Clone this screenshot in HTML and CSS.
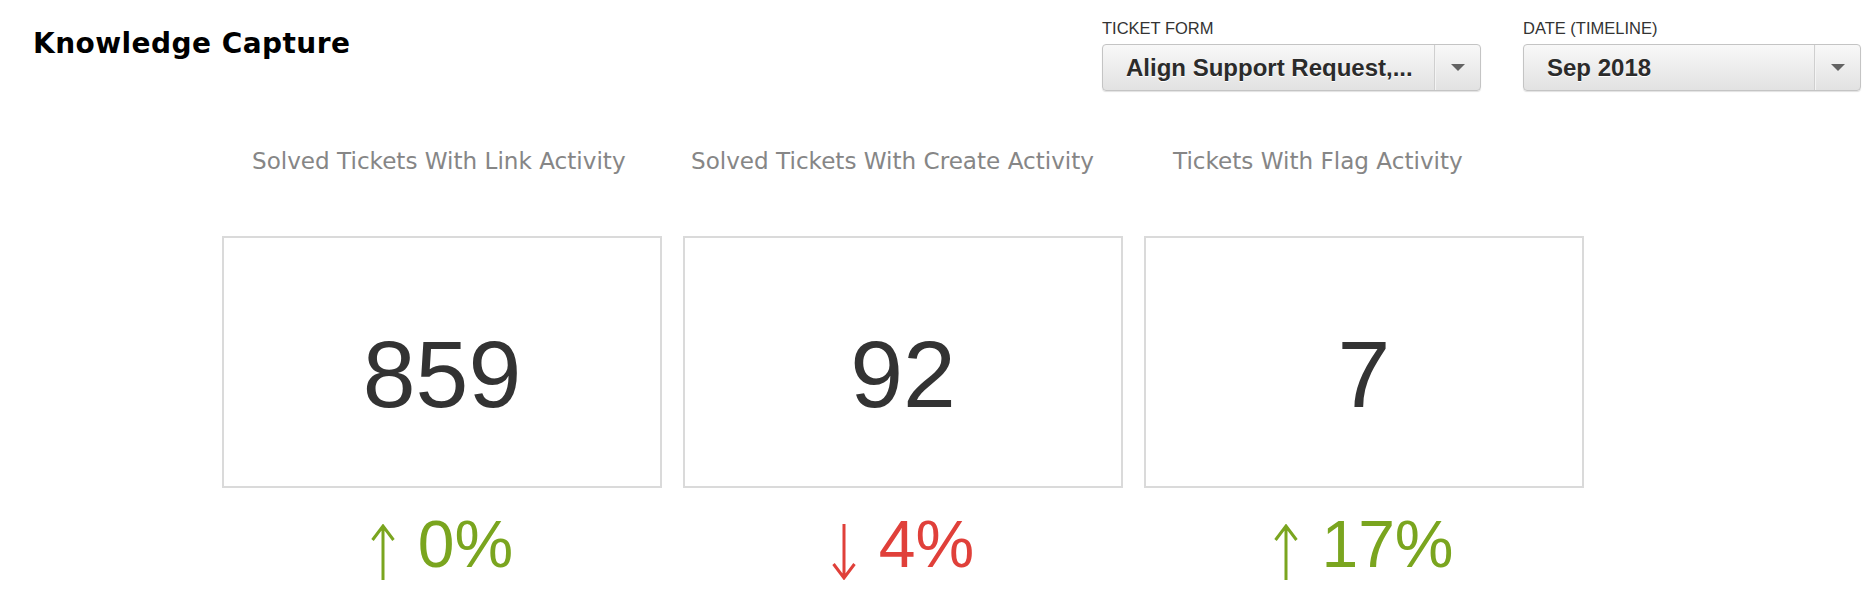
FILE: index.html
```html
<!DOCTYPE html>
<html>
<head>
<meta charset="utf-8">
<link rel="stylesheet" href="styles.css">
</head>
<body>
<div class="topbar">
  <h1 class="title">Knowledge Capture</h1>
  <div class="filters">
    <div class="filter">
      <div class="filter-label">TICKET FORM</div>
      <div class="select select-form">
        <span class="select-text">Align Support Request,...</span>
        <span class="select-arrow"><span class="tri"></span></span>
      </div>
    </div>
    <div class="filter">
      <div class="filter-label">DATE (TIMELINE)</div>
      <div class="select select-date">
        <span class="select-text">Sep 2018</span>
        <span class="select-arrow"><span class="tri"></span></span>
      </div>
    </div>
  </div>
</div>

<div class="metrics">
  <div class="metric">
    <div class="metric-title mt-1">Solved Tickets With Link Activity</div>
    <div class="metric-box"><span class="metric-value">859</span></div>
    <div class="change up">
      <svg class="arrow" viewBox="0 0 24 56" width="24" height="56"><path d="M12 2 V56 M1.5 16 L12 2 L22.5 16" fill="none" stroke="currentColor" stroke-width="3"/></svg>
      <span class="change-value">0%</span>
    </div>
  </div>
  <div class="metric">
    <div class="metric-title mt-2">Solved Tickets With Create Activity</div>
    <div class="metric-box"><span class="metric-value">92</span></div>
    <div class="change down">
      <svg class="arrow" viewBox="0 0 24 56" width="24" height="56"><path d="M12 0 V54 M1.5 40 L12 54 L22.5 40" fill="none" stroke="currentColor" stroke-width="3"/></svg>
      <span class="change-value">4%</span>
    </div>
  </div>
  <div class="metric">
    <div class="metric-title mt-3">Tickets With Flag Activity</div>
    <div class="metric-box"><span class="metric-value">7</span></div>
    <div class="change up">
      <svg class="arrow" viewBox="0 0 24 56" width="24" height="56"><path d="M12 2 V56 M1.5 16 L12 2 L22.5 16" fill="none" stroke="currentColor" stroke-width="3"/></svg>
      <span class="change-value">17%</span>
    </div>
  </div>
</div>
</body>
</html>
```

FILE: styles.css
```css
* { box-sizing: border-box; }
html, body { margin: 0; padding: 0; background: #fff; }
body { font-family: "Liberation Sans", Arial, sans-serif; color: #333; }

.topbar {
  display: flex;
  justify-content: space-between;
  align-items: flex-start;
  padding: 0 15px 0 33px;
  height: 148px;
}

.title {
  margin: 30px 0 0 0;
  font-family: "DejaVu Sans", sans-serif;
  font-weight: bold;
  font-size: 28px;
  line-height: 28px;
  color: #000;
  letter-spacing: 0.45px;
}

.filters {
  display: flex;
  gap: 42px;
  padding-top: 18px;
}

.filter-label {
  font-size: 16.5px;
  line-height: 20px;
  color: #333;
  margin-bottom: 6px;
}

.select {
  display: flex;
  height: 47px;
  border: 1px solid #c4c4c4;
  border-radius: 4px;
  background: linear-gradient(#f8f8f8, #e2e2e2);
  box-shadow: 0 1px 1px rgba(0,0,0,0.12);
}
.select-form { width: 379px; }
.select-date { width: 338px; }

.select-text {
  flex: 1;
  padding-left: 23px;
  font-weight: bold;
  font-size: 24px;
  line-height: 45px;
  color: #2b2b2b;
  text-shadow: 0 1px 0 #fff;
  white-space: nowrap;
}

.select-arrow {
  width: 46px;
  border-left: 1px solid #cfcfcf;
  box-shadow: inset 1px 0 0 #f4f4f4;
  display: flex;
  align-items: center;
  justify-content: center;
}
.tri {
  width: 0;
  height: 0;
  border-left: 7px solid transparent;
  border-right: 7px solid transparent;
  border-top: 7px solid #636363;
}

.metrics {
  display: grid;
  grid-template-columns: 440px 440px 440px;
  column-gap: 21px;
  padding-left: 222px;
}

.metric-title {
  font-family: "DejaVu Sans", sans-serif;
  font-size: 23.1px;
  line-height: 27px;
  color: #868686;
  white-space: nowrap;
  margin-bottom: 61px;
}
.mt-1 { padding-left: 30px; }
.mt-2 { padding-left: 8px; }
.mt-3 { padding-left: 29px; }

.metric-box {
  height: 252px;
  border: 2px solid #dadada;
  display: flex;
  align-items: center;
  justify-content: center;
  padding-top: 25px;
}
.metric-value {
  font-size: 95px;
  line-height: 95px;
  color: #333;
}

.change {
  display: flex;
  justify-content: center;
  align-items: flex-start;
  gap: 23px;
  margin-top: 23px;
}
.change.up { color: #7aa51f; }
.change.down { color: #e0403a; }
.arrow { margin-top: 13px; display: block; }
.change-value {
  font-size: 66px;
  line-height: 66px;
}
```
